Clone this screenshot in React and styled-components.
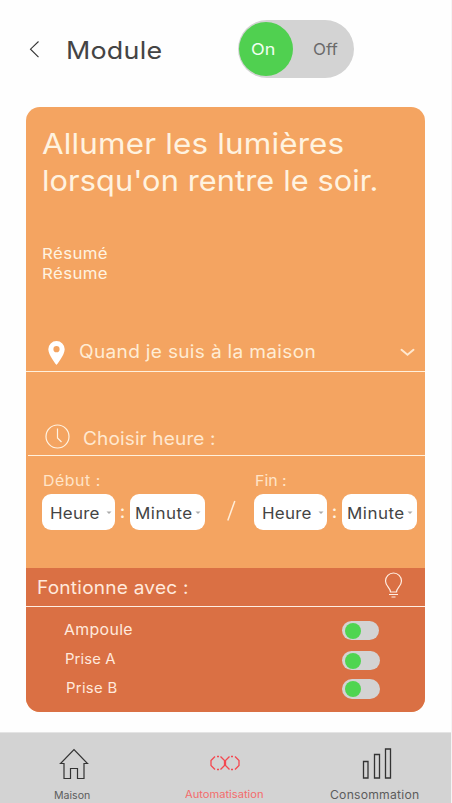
import React from 'react';
import styled, { createGlobalStyle } from 'styled-components';

const GlobalStyle = createGlobalStyle`
  * { box-sizing: border-box; }
  body {
    margin: 0;
    background: #fefefe;
    font-family: Inter, "Open Sans", sans-serif;
  }
`;

const Screen = styled.div`
  display: flex;
  flex-direction: column;
  width: 452px;
  height: 803px;
  overflow: hidden;
  border-right: 1px solid #f5f5f5;
  color: #444;
`;

/* Slightly widened lettering */
const Label = styled.span`
  display: block;
  width: max-content;
  font-size: ${(p) => p.$size}px;
  line-height: ${(p) => p.$leading || 20}px;
  letter-spacing: ${(p) => p.$track || 0}px;
  white-space: nowrap;
  transform: scaleX(${(p) => p.$stretch || 1.06});
  transform-origin: 0 50%;
`;

const Header = styled.header`
  display: flex;
  flex: none;
  height: 107px;
  padding: 20px 0 0 29px;
`;

const BackIcon = styled.svg`
  flex: none;
  width: 11px;
  height: 18px;
  margin-top: 20px;
`;

const PageTitle = styled.h1`
  width: 170px;
  margin: 16px 0 0 26px;
  font-weight: 400;
`;

const PowerSwitch = styled.div`
  display: flex;
  width: 116px;
  height: 58px;
  margin-left: 2px;
  padding: 3px 1px;
  border-radius: 29px;
  background: #d3d3d3;
`;

const PowerOn = styled.div`
  width: 54px;
  height: 54px;
  margin-top: -1px;
  padding: 17px 0 0 12px;
  border-radius: 50%;
  background: #50d050;
  color: #f1fff0;
`;

const PowerOff = styled.div`
  padding: 16px 0 0 20px;
  color: #6b6b6b;
`;

const Card = styled.main`
  flex: none;
  display: flex;
  flex-direction: column;
  width: 399px;
  height: 605px;
  margin-left: 26px;
  border-radius: 14px;
  overflow: hidden;
  background: #f4a461;
  color: #fff3e0;
`;

const Summary = styled.section`
  height: 225px;
  padding: 19px 0 0 16px;
`;

const Heading = styled.h2`
  margin: 0 0 45px;
  font-weight: 400;
`;

const Condition = styled.div`
  display: flex;
  height: 40px;
  padding: 9px 10px 0 22px;
  border-bottom: 1px solid #fff0dc;
`;

const ConditionText = styled.div`
  flex: 1;
  padding: 1px 0 0 14px;
  color: #ffecd4;
`;

const PinIcon = styled.svg`
  width: 17px;
  height: 24px;
`;

const ChevronIcon = styled.svg`
  width: 15px;
  height: 9px;
  margin-top: 7px;
`;

const TimeRow = styled.div`
  display: flex;
  height: 84px;
  margin-left: 2px;
  padding: 52px 0 0 17px;
  border-bottom: 1px solid #fff0dc;
`;

const TimeText = styled.div`
  padding: 5px 0 0 13px;
  color: #ffe8d0;
`;

const ClockIcon = styled.svg`
  width: 25px;
  height: 25px;
`;

const TimeRange = styled.section`
  display: flex;
  height: 112px;
  padding: 15px 0 0 16px;
`;

const TimeGroup = styled.div`
  width: ${(p) => p.$width}px;
`;

const GroupName = styled.div`
  padding-left: 1px;
  color: #ffe5c9;
`;

const Pickers = styled.div`
  display: flex;
  margin-top: 3px;
`;

const Picker = styled.div`
  display: flex;
  width: ${(p) => p.$width}px;
  height: 36px;
  padding: 9px 0 0 ${(p) => p.$inset}px;
  border-radius: 9px;
  background: #fff;
  color: #444;
`;

const PickerText = styled.div`
  width: ${(p) => p.$width}px;
`;

const PickerArrow = styled.svg`
  width: 6px;
  height: 4px;
  margin-top: 8px;
`;

const Colon = styled.div`
  width: 15px;
  padding-top: 8px;
  text-align: center;
  font-size: 18px;
  font-weight: 500;
  line-height: 20px;
`;

const SlashIcon = styled.svg`
  width: 9px;
  height: 22px;
  margin: 29px 18px 0 0;
`;

const Devices = styled.section`
  height: 144px;
  background: #da7044;
  color: #ffe9dc;
`;

const DevicesHeader = styled.div`
  display: flex;
  justify-content: space-between;
  height: 39px;
  padding: 4px 22px 0 11px;
  border-bottom: 1px solid #ffeee2;
`;

const DevicesTitle = styled.div`
  padding-top: 6px;
`;

const BulbIcon = styled.svg`
  width: 19px;
  height: 28px;
`;

const DeviceRow = styled.div`
  display: flex;
  justify-content: space-between;
  height: 29px;
  padding: 13px ${(p) => p.$right}px 0 ${(p) => p.$left}px;
`;

const Toggle = styled.div`
  width: ${(p) => p.$width}px;
  height: ${(p) => p.$height}px;
  margin-top: ${(p) => p.$drop}px;
  padding: 2px 3px;
  border-radius: 10px;
  background: #d3d3d3;
`;

const Knob = styled.div`
  width: 16px;
  height: 16px;
  border-radius: 50%;
  background: #4fd550;
`;

const TabBar = styled.nav`
  display: flex;
  flex: none;
  width: 452px;
  height: 71px;
  margin-top: 20px;
  border-top: 1px solid #e4e4e4;
  background: #d3d3d3;
`;

const Tab = styled.div`
  width: ${(p) => p.$width}px;
  padding: 13px 0 0 ${(p) => p.$left}px;
  color: ${(p) => (p.$active ? '#f46b6b' : '#5c5c5c')};
`;

const TabIcon = styled.svg`
  display: block;
  width: 32px;
  height: 34px;
  margin-left: ${(p) => p.$shift}px;
`;

const TabLabel = styled.div`
  margin-top: 5px;
`;

const Arrow = () => (
  <PickerArrow viewBox="0 0 6 4">
    <path d="M.5.5h5L3 3z" fill="#aaa" />
  </PickerArrow>
);

const HourPicker = () => (
  <Picker $width={73} $inset={8}>
    <PickerText $width={56}>
      <Label $size={16} $track={0.2}>Heure</Label>
    </PickerText>
    <Arrow />
  </Picker>
);

const MinutePicker = () => (
  <Picker $width={75} $inset={5}>
    <PickerText $width={60}>
      <Label $size={16} $track={0.45}>Minute</Label>
    </PickerText>
    <Arrow />
  </Picker>
);

const TimePickers = () => (
  <Pickers>
    <HourPicker />
    <Colon>:</Colon>
    <MinutePicker />
  </Pickers>
);

const devices = [
  { name: 'Ampoule', size: 15, track: 0.3, left: 38, right: 46, width: 37, height: 19, drop: 1 },
  { name: 'Prise A', size: 14, track: 0.1, left: 39, right: 45, width: 38, height: 19, drop: 2 },
  { name: 'Prise B', size: 14, track: 0.3, left: 40, right: 45, width: 38, height: 20, drop: 1 },
];

export default function App() {
  return (
    <Screen>
      <GlobalStyle />
      <Header>
        <BackIcon viewBox="0 0 11 18" fill="none" stroke="#333" strokeWidth="1.1">
          <path d="M9.5 1.5 1.5 9.2l8 8" />
        </BackIcon>
        <PageTitle>
          <Label $size={24} $track={0.2} $leading={30} $stretch={1.12}>Module</Label>
        </PageTitle>
        <PowerSwitch>
          <PowerOn><Label $size={16} $track={0.1} $stretch={1.12}>On</Label></PowerOn>
          <PowerOff><Label $size={16}>Off</Label></PowerOff>
        </PowerSwitch>
      </Header>

      <Card>
        <Summary>
          <Heading>
            <Label $size={29} $track={0.15} $leading={36} $stretch={1.083}>Allumer les lumières</Label>
            <Label $size={29} $track={0.09} $leading={37}>lorsqu'on rentre le soir.</Label>
          </Heading>
          <Label $size={15} $track={0.35} $stretch={1.12}>Résumé</Label>
          <Label $size={15} $track={0.35} $stretch={1.12}>Résume</Label>
        </Summary>

        <Condition>
          <PinIcon viewBox="0 0 17 24">
            <path
              d="M8.5 0A8.2 8.2 0 0 0 .3 8.2C.3 14 8.5 24 8.5 24s8.2-10 8.2-15.8A8.2 8.2 0 0 0 8.5 0zm0 5.1a3.1 3.1 0 1 1 0 6.200 3.100 3.100 0 0 1 0-6.200z"
              fill="#fff"
            />
          </PinIcon>
          <ConditionText>
            <Label $size={18} $track={0.3}>Quand je suis à la maison</Label>
          </ConditionText>
          <ChevronIcon viewBox="0 0 15 9" fill="none" stroke="#ffe8cf" strokeWidth="2" strokeLinecap="round">
            <path d="m1.500 1.800 6 5 6-5" />
          </ChevronIcon>
        </Condition>

        <TimeRow>
          <ClockIcon viewBox="0 0 25 25" fill="none" stroke="#fff3e3" strokeWidth="1.200">
            <circle cx="12.500" cy="12.500" r="11.500" />
            <path d="M12.500 4.500V14l4 4" />
          </ClockIcon>
          <TimeText>
            <Label $size={18} $track={0.1}>Choisir heure :</Label>
          </TimeText>
        </TimeRow>

        <TimeRange>
          <TimeGroup $width={185}>
            <GroupName><Label $size={15} $track={0.5}>Début :</Label></GroupName>
            <TimePickers />
          </TimeGroup>
          <SlashIcon viewBox="0 0 9 22" stroke="#ffeeda" strokeWidth="1.500">
            <path d="M7.800 1 .8 20.500" />
          </SlashIcon>
          <TimeGroup $width={165}>
            <GroupName><Label $size={15}>Fin :</Label></GroupName>
            <TimePickers />
          </TimeGroup>
        </TimeRange>

        <Devices>
          <DevicesHeader>
            <DevicesTitle>
              <Label $size={18} $track={0.2}>Fontionne avec :</Label>
            </DevicesTitle>
            <BulbIcon viewBox="0 0 19 28" fill="none" stroke="#ffeee3" strokeWidth="1.200">
              <path d="M6.500 20c0-4-5-6-5-11a8 8 0 0 1 16 0c0 5-5 7-5 11zM5 22.500h9M7.500 25h4" />
            </BulbIcon>
          </DevicesHeader>
          {devices.map((d) => (
            <DeviceRow key={d.name} $left={d.left} $right={d.right}>
              <Label $size={d.size} $track={d.track}>{d.name}</Label>
              <Toggle $width={d.width} $height={d.height} $drop={d.drop}><Knob /></Toggle>
            </DeviceRow>
          ))}
        </Devices>
      </Card>

      <TabBar>
        <Tab $width={185} $left={54}>
          <TabIcon $shift={4} viewBox="0 0 32 34" fill="none" stroke="#333" strokeWidth="1.200">
            <path d="M6 17.500H2.500L16 3.500l13.500 14H26v15h-6.500v-10h-7v10H6z" />
          </TabIcon>
          <TabLabel><Label $size={10}>Maison</Label></TabLabel>
        </Tab>
        <Tab $width={145} $left={0} $active>
          <TabIcon $shift={24} viewBox="0 0 32 34" fill="none" stroke="#f4474f" strokeWidth="1.300">
            <path d="M6 10.500 2 14.500v5l4 4M8 10.500h2M8 23.500h2M11.500 10.500l4 4v5l-4 4M20.500 10.500l-4 4v5l4 4M22 10.500h2M22 23.500h2M26 10.500l4 4v5l-4 4" />
          </TabIcon>
          <TabLabel><Label $size={10.5}>Automatisation</Label></TabLabel>
        </Tab>
        <Tab $width={122} $left={0}>
          <TabIcon $shift={31} viewBox="0 0 32 34" fill="none" stroke="#333" strokeWidth="1.300">
            <path d="M2.500 15.500h4.500v16.500H2.500zM13.500 8.500h5v23.500h-5zM24.500 3h5v29h-5z" />
          </TabIcon>
          <TabLabel><Label $size={11.5} $track={0.2}>Consommation</Label></TabLabel>
        </Tab>
      </TabBar>
    </Screen>
  );
}
